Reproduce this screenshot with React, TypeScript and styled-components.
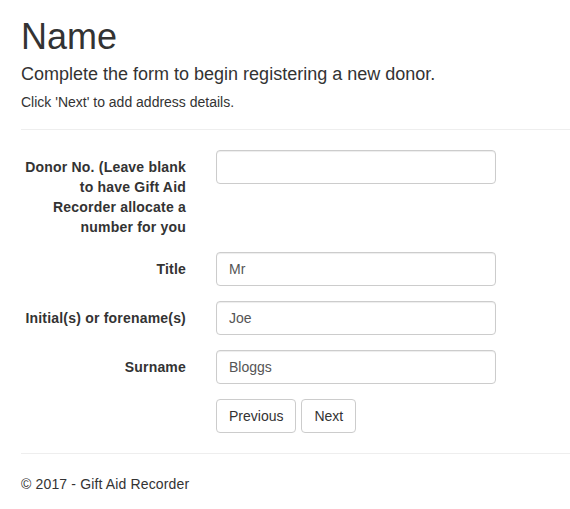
import React from "react";
import styled, { createGlobalStyle } from "styled-components";

const GlobalStyle = createGlobalStyle`
  * {
    box-sizing: border-box;
  }
  body {
    margin: 0;
    background: #fff;
    font-family: "Liberation Sans", Arial, sans-serif;
    font-size: 14px;
    line-height: 1.42857143;
    color: #333;
  }
`;

const Page = styled.div`
  padding-left: 21px;
`;

const Title = styled.h1`
  margin: 17px 0 8px;
  font-size: 36px;
  font-weight: 500;
  line-height: 1.1;
`;

const Lead = styled.h4`
  margin: 0 0 8px;
  font-size: 18px;
  font-weight: 500;
  line-height: 1.1;
`;

const Hint = styled.p`
  margin: 0;
`;

const Rule = styled.hr<{ $top: number }>`
  margin: ${(p) => p.$top}px 0 20px;
  border: 0;
  border-top: 1px solid #eee;
`;

const Form = styled.form`
  display: flex;
  flex-direction: column;
  gap: 15px;
`;

const FormRow = styled.div`
  display: grid;
  grid-template-columns: 165px 280px;
  column-gap: 30px;
  align-items: start;
`;

const Label = styled.label`
  padding-top: 7px;
  font-weight: bold;
  text-align: right;
  line-height: 20px;
  letter-spacing: 0.2px;
`;

const Input = styled.input`
  display: block;
  width: 100%;
  height: 34px;
  padding: 6px 12px;
  font-family: inherit;
  font-size: 14px;
  line-height: 1.42857143;
  color: #555;
  background: #fff;
  border: 1px solid #ccc;
  border-radius: 4px;
  box-shadow: inset 0 1px 1px rgba(0, 0, 0, 0.075);
  outline: none;
`;

const Buttons = styled.div`
  display: flex;
  gap: 5px;
`;

const Button = styled.button`
  height: 34px;
  padding: 6px 12px;
  font-family: inherit;
  font-size: 14px;
  line-height: 1.42857143;
  color: #333;
  background: #fff;
  border: 1px solid #ccc;
  border-radius: 4px;
  cursor: pointer;
`;

const Footer = styled.footer`
  p {
    margin: 0;
    letter-spacing: 0.15px;
  }
`;

const fields = [
  { label: "Donor No. (Leave blank to have Gift Aid Recorder allocate a number for you", value: "" },
  { label: "Title", value: "Mr" },
  { label: "Initial(s) or forename(s)", value: "Joe" },
  { label: "Surname", value: "Bloggs" },
];

const App = () => {
  return (
    <>
      <GlobalStyle />
      <Page>
        <Title>Name</Title>
        <Lead>Complete the form to begin registering a new donor.</Lead>
        <Hint>Click 'Next' to add address details.</Hint>
        <Rule $top={17} />
        <Form onSubmit={(e) => e.preventDefault()}>
          {fields.map((f) => (
            <FormRow key={f.label}>
              <Label>{f.label}</Label>
              <Input defaultValue={f.value} />
            </FormRow>
          ))}
          <FormRow>
            <span />
            <Buttons>
              <Button type="button">Previous</Button>
              <Button type="submit">Next</Button>
            </Buttons>
          </FormRow>
        </Form>
        <Rule $top={20} />
        <Footer>
          <p>&copy; 2017 - Gift Aid Recorder</p>
        </Footer>
      </Page>
    </>
  );
};

export default App;
